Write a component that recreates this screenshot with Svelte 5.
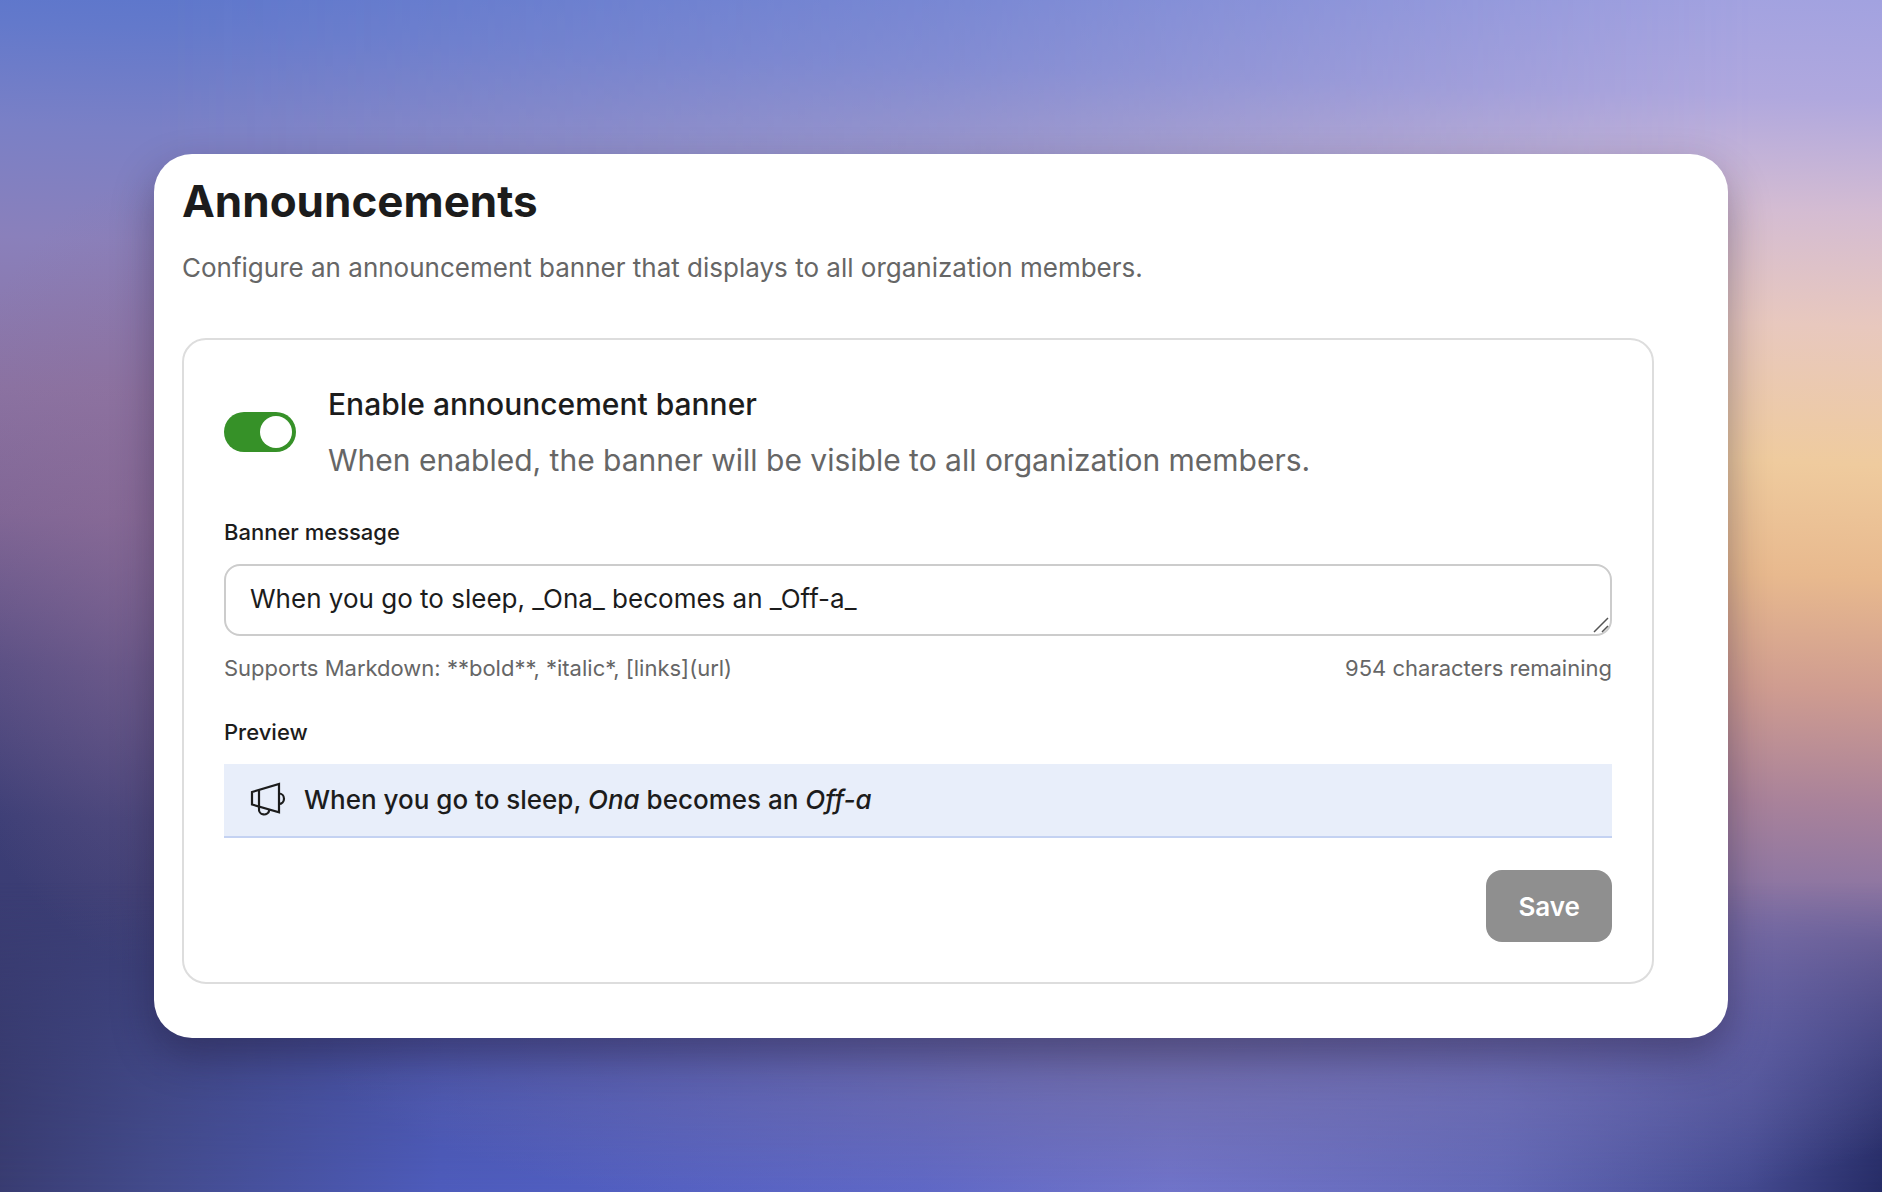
<script lang="ts">
	const MAX_LENGTH = 1000;

	let enabled = $state(true);
	let message = $state('When you go to sleep, _Ona_ becomes an _Off-a_');
	let remaining = $derived(MAX_LENGTH - message.length);

	// Split on _emphasis_ so the odd parts can be set in italics
	let parts = $derived(message.split(/_([^_]+)_/));
</script>

<main class="backdrop">
	<section class="window">
		<header>
			<h1>Announcements</h1>
			<p class="lead">Configure an announcement banner that displays to all organization members.</p>
		</header>

		<form class="panel" onsubmit={(e) => e.preventDefault()}>
			<div class="toggle-row">
				<input id="enabled" class="switch" type="checkbox" role="switch" bind:checked={enabled} aria-describedby="enabled-hint" />
				<div class="toggle-text">
					<label for="enabled">Enable announcement banner</label>
					<p id="enabled-hint">When enabled, the banner will be visible to all organization members.</p>
				</div>
			</div>

			<div class="field">
				<label class="caption" for="message">Banner message</label>
				<div class="input-wrap">
					<textarea id="message" rows="1" maxlength={MAX_LENGTH} bind:value={message}></textarea>
					<svg class="grip" viewBox="0 0 16 16" fill="none" stroke="currentColor" stroke-width="1.5" aria-hidden="true">
						<path d="M1 15 15 1M9 15l6-6" />
					</svg>
				</div>
				<div class="hints">
					<span>Supports Markdown: **bold**, *italic*, [links](url)</span>
					<span>{remaining} characters remaining</span>
				</div>
			</div>

			<div class="field">
				<h2 class="caption">Preview</h2>
				<div class="banner">
					<svg viewBox="0 0 40 40" fill="none" stroke="currentColor" stroke-width="2.2" aria-hidden="true">
						<path d="M4 12 31 4v28.3L4 24.5z" />
						<path d="M11 10v16.5" />
						<path d="M31 13.5a5 5.200 0 0 1 0 10.4" />
						<path d="M11 26.5v2a5.200 5.200 0 0 0 10.3 1.5" />
					</svg>
					<p>{#each parts as part, i}{#if i % 2}<em>{part}</em>{:else}{part}{/if}{/each}</p>
				</div>
			</div>

			<div class="actions">
				<button type="submit" disabled>Save</button>
			</div>
		</form>
	</section>
</main>

<style>
	:global(body) {
		margin: 0;
	}

	.backdrop {
		box-sizing: border-box;
		position: relative;
		isolation: isolate;
		min-height: 100vh;
		display: grid;
		align-items: center;
		padding: 154px;
		font-family: Inter, 'Liberation Sans', sans-serif;
		color: #1c1c1c;
		background:
			radial-gradient(ellipse 14% 34% at 10% 48%, #94709888 0%, #94709800 100%),
			linear-gradient(
				182deg,
				#5573cc 0%,
				#6379cb 7%,
				#7a80c6 15%,
				#8a80bb 24%,
				#8a72a2 36%,
				#7e6595 46%,
				#544c82 58%,
				#3c3e76 70%,
				#36396c 100%
			);
	}

	.backdrop::before,
	.backdrop::after {
		content: '';
		position: absolute;
		inset: 0;
		z-index: -1;
	}

	/* Warm glow that fades in towards the right edge */
	.backdrop::before {
		background: linear-gradient(
			182deg,
			#a2a2e0 0%,
			#b0a8de 8%,
			#d4bcd2 17%,
			#e8c8be 26%,
			#efcb9e 37%,
			#e8b98e 46%,
			#cf9c90 55%,
			#a9829a 64%,
			#8070a6 74%,
			#6862a6 84%,
			#4c5096 94%,
			#343a7c 100%
		);
		mask-image: linear-gradient(90deg, transparent 8%, rgba(0, 0, 0, 0.4) 50%, #000 93%);
	}

	/* Blue wash along the bottom */
	.backdrop::after {
		background:
			radial-gradient(ellipse 45% 16% at 62% 88%, #7c78b8 0%, #7c78b800 100%),
			linear-gradient(
				92deg,
				#36386a 0%,
				#434b8c 10%,
				#4e5cbc 25%,
				#5864ca 50%,
				#6c72d0 63%,
				#5e66b8 80%,
				#444a90 93%,
				#262c66 100%
			);
		mask-image: linear-gradient(180deg, transparent 74%, rgba(0, 0, 0, 0.75) 90%, #000 100%);
	}

	.window {
		padding: 20px 74px 54px 28px;
		border-radius: 38px;
		background: #fff;
		box-shadow: 0 18px 40px rgba(30, 22, 50, 0.38);
	}

	h1,
	h2,
	p {
		margin: 0;
	}

	h1 {
		font-size: 44px;
		line-height: 54px;
		font-weight: 700;
	}

	.lead {
		margin-top: 20px;
		font-size: 26px;
		line-height: 40px;
		color: #666;
	}

	.panel {
		margin-top: 50px;
		padding: 40px;
		border: 2px solid #ddd;
		border-radius: 24px;
	}

	.toggle-row {
		display: flex;
		align-items: center;
		gap: 32px;
	}

	.switch {
		appearance: none;
		flex: none;
		width: 72px;
		height: 40px;
		margin: 0;
		padding: 4px;
		border-radius: 20px;
		background: #999;
	}

	.switch::before {
		content: '';
		display: block;
		width: 32px;
		height: 32px;
		border-radius: 50%;
		background: #fff;
	}

	.switch:checked {
		background: #369128;
	}

	.switch:checked::before {
		margin-left: auto;
	}

	.toggle-text {
		font-size: 30px;
		line-height: 48px;
	}

	.toggle-text label {
		font-weight: 500;
	}

	.toggle-text p {
		margin-top: 8px;
		color: #666;
	}

	.field {
		display: flex;
		flex-direction: column;
		margin-top: 32px;
	}

	.caption {
		font-size: 22px;
		line-height: 32px;
		font-weight: 500;
	}

	.input-wrap {
		position: relative;
		display: flex;
		margin: 16px 0;
	}

	textarea {
		box-sizing: border-box;
		width: 100%;
		height: 72px;
		margin: 0;
		padding: 13px 24px;
		border: 2px solid #ccc;
		border-radius: 16px;
		background: #fff;
		color: inherit;
		font: inherit;
		font-size: 26px;
		line-height: 40px;
		resize: vertical;
	}

	textarea::-webkit-resizer {
		background: transparent;
	}

	.grip {
		position: absolute;
		right: 3px;
		bottom: 3px;
		width: 16px;
		height: 16px;
		color: #555;
		pointer-events: none;
	}

	.hints {
		display: flex;
		justify-content: space-between;
		font-size: 22px;
		line-height: 32px;
		color: #666;
	}

	.banner {
		display: flex;
		align-items: center;
		gap: 16px;
		margin-top: 16px;
		padding: 16px 24px;
		border-bottom: 2px solid #c4d2f2;
		background: #e8eefa;
		font-size: 26px;
		line-height: 40px;
		font-weight: 500;
	}

	.banner svg {
		flex: none;
		width: 40px;
		height: 40px;
	}

	.actions {
		display: flex;
		justify-content: flex-end;
		margin-top: 32px;
	}

	button {
		height: 72px;
		padding: 0 32px;
		border: 0;
		border-radius: 16px;
		background: #8f8f8f;
		color: #fff;
		font: inherit;
		font-size: 26px;
		font-weight: 600;
	}
</style>
